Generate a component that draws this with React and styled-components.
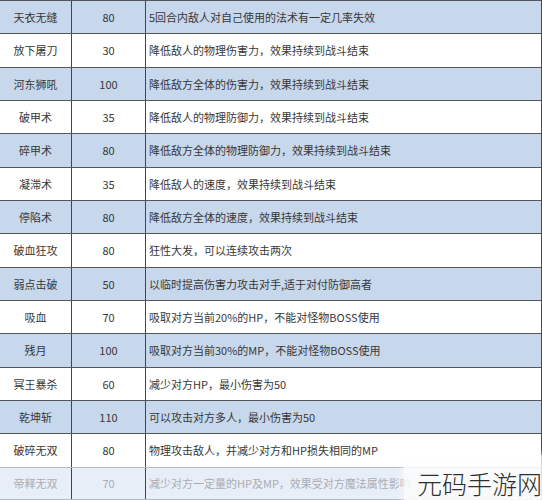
import React from 'react'
import styled, { createGlobalStyle } from 'styled-components'

const GlobalStyle = createGlobalStyle`
    html, body {
        margin: 0;
        padding: 0;
        background: #fff;
    }
    body {
        width: 542px;
        height: 500px;
        overflow: hidden;
        font-family: "Noto Sans CJK SC", "Noto Sans", sans-serif;
    }
`

const Page = styled.div`
    position: relative;
    width: 542px;
    height: 500px;
    overflow: hidden;
`

const Table = styled.div`
    display: flex;
    flex-direction: column;
    border-right: 1px solid #4a4a4a;
`

const Row = styled.div`
    display: grid;
    grid-template-columns: 72px 74px 1fr;
    height: 33.33px;
    box-sizing: border-box;
    border-top: 1.5px solid ${p => (p.$faded ? '#b8bcc2' : '#565656')};
    background: ${p => (p.$faded ? '#e8eef7' : p.$blue ? '#c7d7ec' : '#ffffff')};
    color: ${p => (p.$faded ? '#a9adb3' : '#383838')};
    font-size: 11px;
    &:last-child {
        border-bottom: 1.5px solid #b8bcc2;
    }
`

const Cell = styled.div`
    display: flex;
    align-items: center;
    justify-content: ${p => (p.$left ? 'flex-start' : 'center')};
    padding-left: ${p => (p.$left ? '3px' : '0')};
    border-right: ${p => (p.$last ? 'none' : '1px solid #444')};
    white-space: nowrap;
    overflow: hidden;
`

const Watermark = styled.div`
    position: absolute;
    left: 404px;
    top: 455px;
    width: 150px;
    height: 50px;
    border-radius: 6px 0 0 0;
    background: linear-gradient(180deg, rgba(255, 255, 255, 0.75), rgba(250, 250, 250, 0.95));
    box-shadow: 0 0 8px rgba(255, 255, 255, 0.8);
    display: flex;
    align-items: center;
    padding-left: 13px;
    box-sizing: border-box;
`

const MarkText = styled.span`
    font-family: "Noto Sans CJK SC", sans-serif;
    font-size: 25px;
    font-weight: 300;
    color: #2e2e2e;
    white-space: nowrap;
    margin-top: 6px;
`

const skills = [
    ['天衣无缝', '80', '5回合内敌人对自己使用的法术有一定几率失效'],
    ['放下屠刀', '30', '降低敌人的物理伤害力，效果持续到战斗结束'],
    ['河东狮吼', '100', '降低敌方全体的伤害力，效果持续到战斗结束'],
    ['破甲术', '35', '降低敌人的物理防御力，效果持续到战斗结束'],
    ['碎甲术', '80', '降低敌方全体的物理防御力，效果持续到战斗结束'],
    ['凝滞术', '35', '降低敌人的速度，效果持续到战斗结束'],
    ['停陷术', '80', '降低敌方全体的速度，效果持续到战斗结束'],
    ['破血狂攻', '80', '狂性大发，可以连续攻击两次'],
    ['弱点击破', '50', '以临时提高伤害力攻击对手,适于对付防御高者'],
    ['吸血', '70', '吸取对方当前20%的HP，不能对怪物BOSS使用'],
    ['残月', '100', '吸取对方当前30%的MP，不能对怪物BOSS使用'],
    ['冥王暴杀', '60', '减少对方HP，最小伤害为50'],
    ['乾坤斩', '110', '可以攻击对方多人，最小伤害为50'],
    ['破碎无双', '80', '物理攻击敌人，并减少对方和HP损失相同的MP'],
    ['帝释无双', '70', '减少对方一定量的HP及MP，效果受对方魔法属性影响'],
]

const App = () => {
    return (
        <Page>
            <GlobalStyle />
            <Table>
                {skills.map(([name, cost, desc], i) => (
                    <Row key={name} $blue={i % 2 === 0} $faded={i === skills.length - 1}>
                        <Cell>{name}</Cell>
                        <Cell>{cost}</Cell>
                        <Cell $left $last>{desc}</Cell>
                    </Row>
                ))}
            </Table>
            <Watermark>
                <MarkText>元码手游网</MarkText>
            </Watermark>
        </Page>
    )
}

export default App
